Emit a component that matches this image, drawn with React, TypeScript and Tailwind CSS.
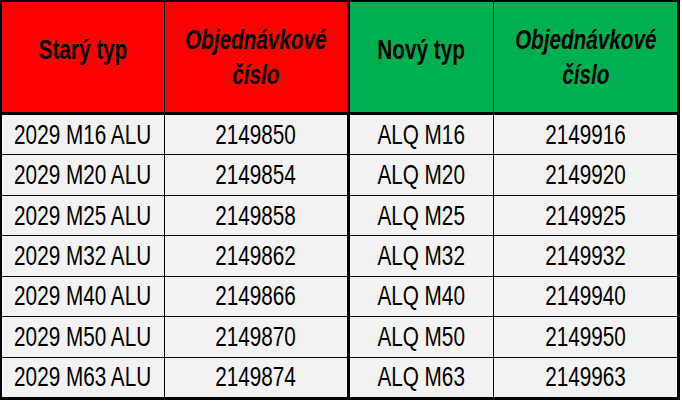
import React from "react";

const rows = [
  ["2029 M16 ALU", "2149850", "ALQ M16", "2149916"],
  ["2029 M20 ALU", "2149854", "ALQ M20", "2149920"],
  ["2029 M25 ALU", "2149858", "ALQ M25", "2149925"],
  ["2029 M32 ALU", "2149862", "ALQ M32", "2149932"],
  ["2029 M40 ALU", "2149866", "ALQ M40", "2149940"],
  ["2029 M50 ALU", "2149870", "ALQ M50", "2149950"],
  ["2029 M63 ALU", "2149874", "ALQ M63", "2149963"],
];

const font = "font-['Liberation_Sans',Arial,sans-serif]";

function T({ children }: { children: React.ReactNode }) {
  return (
    <span className="inline-block whitespace-nowrap scale-x-[0.74] origin-center">
      {children}
    </span>
  );
}

export default function App() {
  return (
    <div className="w-[682px] h-[410px] bg-white overflow-hidden">
      <div
        className={`w-[680px] h-[400px] border-t-2 border-l-2 border-r-[3px] border-b-[3px] border-black flex flex-col text-black ${font}`}
      >
        <div className="h-[113px] shrink-0 border-b-[3px] border-black grid grid-cols-[163px_185px_144px_183px] text-[28px] font-bold">
          <div className="bg-[#ff0000] border-r border-black flex items-center justify-center pb-[14px]">
            <T>Starý typ</T>
          </div>
          <div className="bg-[#ff0000] border-r-[3px] border-black flex flex-col items-center justify-center text-center italic leading-[35px]">
            <T>Objednávkové</T>
            <T>číslo</T>
          </div>
          <div className="bg-[#00b050] border-r border-black flex items-center justify-center pb-[14px]">
            <T>Nový typ</T>
          </div>
          <div className="bg-[#00b050] flex flex-col items-center justify-center text-center italic leading-[35px]">
            <T>Objednávkové</T>
            <T>číslo</T>
          </div>
        </div>
        <div className="flex-1 min-h-0 flex flex-col bg-[#f2f2f2] text-[28px] leading-none">
          {rows.map((r, i) => (
            <div
              key={i}
              className={`flex-1 min-h-0 grid grid-cols-[163px_185px_144px_183px] ${i > 0 ? "border-t border-black" : ""}`}
            >
              <div className="border-r border-black flex items-center justify-center">
                <T>{r[0]}</T>
              </div>
              <div className="border-r-[3px] border-black flex items-center justify-center">
                <T>{r[1]}</T>
              </div>
              <div className="border-r border-black flex items-center justify-center">
                <T>{r[2]}</T>
              </div>
              <div className="flex items-center justify-center">
                <T>{r[3]}</T>
              </div>
            </div>
          ))}
        </div>
      </div>
    </div>
  );
}
